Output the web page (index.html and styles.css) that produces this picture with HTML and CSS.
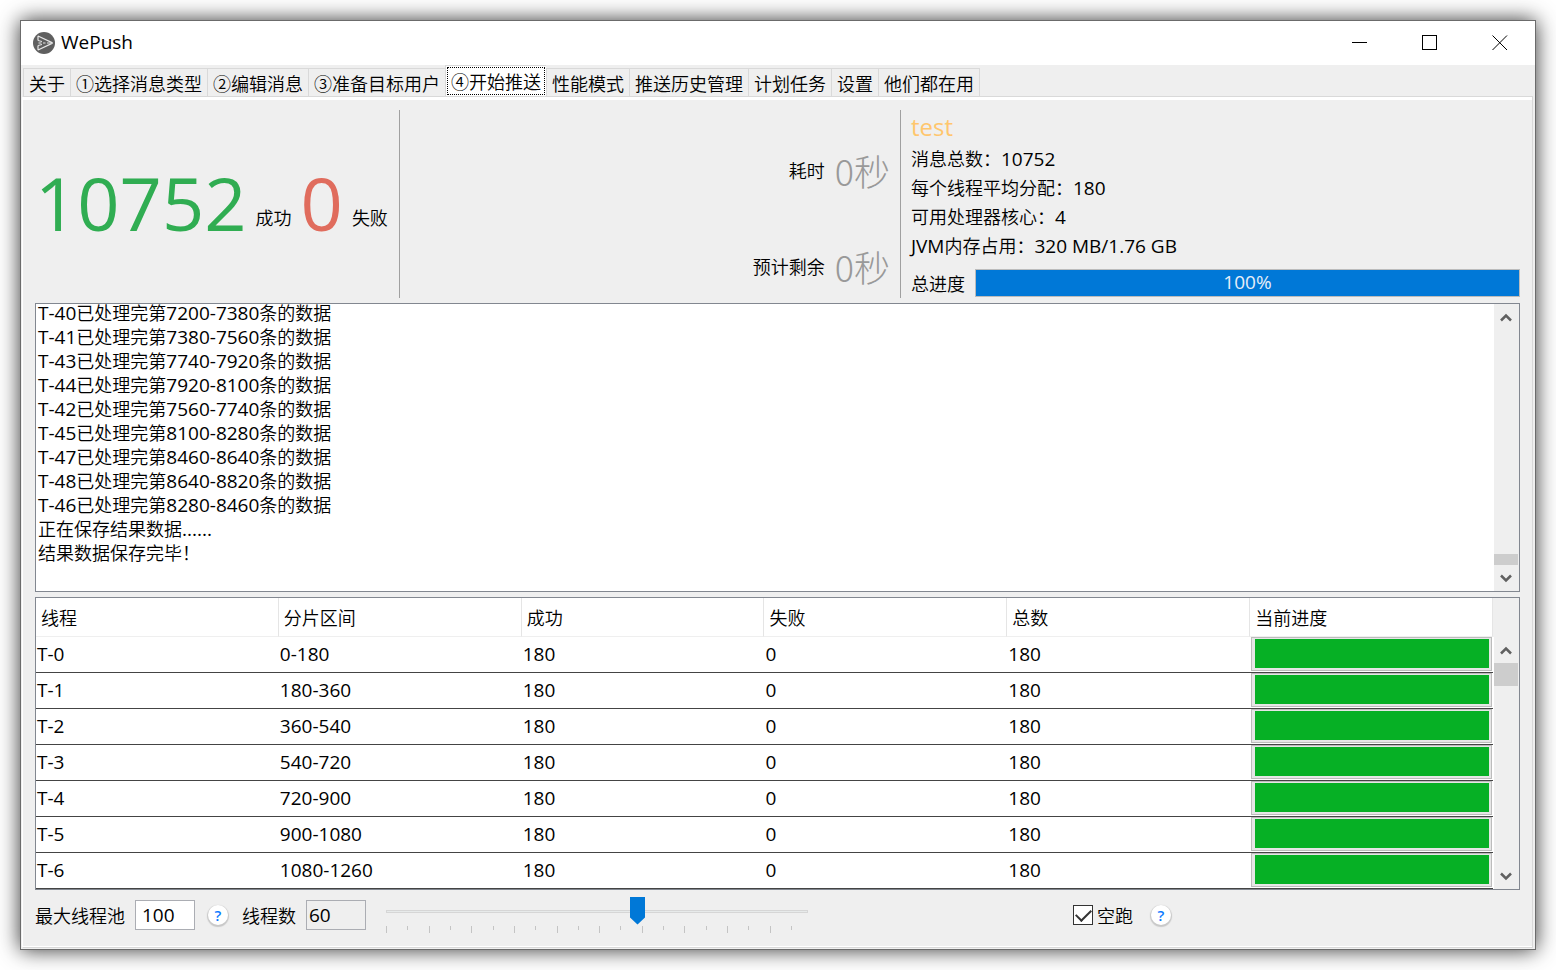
FILE: index.html
```html
<!DOCTYPE html>
<html lang="zh-CN">
<head>
<meta charset="utf-8">
<title>WePush</title>
<link rel="stylesheet" href="styles.css">
</head>
<body>
<main class="window">
  <header class="titlebar">
    <svg class="logo" viewBox="0 0 22 22" aria-hidden="true">
      <circle cx="11" cy="11" r="11" fill="#5f5f5f"/>
      <path d="M5 8.500V4.500Q5 4 5.600 4.200L19 10.600Q19.600 11 19 11.400L5.600 17.800Q5 18 5 17.500V13.500" fill="none" stroke="#e8e8e8" stroke-width="1.2" stroke-linejoin="round"/>
      <path d="M5 8.500L9 9.500M5 13.500L9 12.500M5.500 11H8.500M10 11H12.500M14 11H18" fill="none" stroke="#e8e8e8" stroke-width="1"/>
    </svg>
    <h1 class="title">WePush</h1>
    <div class="controls">
      <button class="control" type="button" aria-label="最小化"><svg viewBox="0 0 16 16" shape-rendering="crispEdges"><path d="M0 7.500H15"/></svg></button>
      <button class="control" type="button" aria-label="最大化"><svg viewBox="0 0 16 16" shape-rendering="crispEdges"><path d="M.5 .5H14.500V14.500H.5Z"/></svg></button>
      <button class="control" type="button" aria-label="关闭"><svg viewBox="0 0 16 16"><path d="M.5 .5L15 15M15 .5L.5 15"/></svg></button>
    </div>
  </header>

  <nav class="tabs" role="tablist">
    <button class="tab" role="tab" type="button">关于</button>
    <button class="tab" role="tab" type="button">①选择消息类型</button>
    <button class="tab" role="tab" type="button">②编辑消息</button>
    <button class="tab" role="tab" type="button">③准备目标用户</button>
    <button class="tab selected" role="tab" type="button" aria-selected="true"><span class="focus">④开始推送</span></button>
    <button class="tab" role="tab" type="button">性能模式</button>
    <button class="tab" role="tab" type="button">推送历史管理</button>
    <button class="tab" role="tab" type="button">计划任务</button>
    <button class="tab" role="tab" type="button">设置</button>
    <button class="tab last" role="tab" type="button">他们都在用</button>
  </nav>

  <section class="panel">
    <div class="stats">
      <div class="counts">
        <span class="big success">10752</span><span class="caption">成功</span>
        <span class="big failure">0</span><span class="caption">失败</span>
      </div>
      <div class="times">
        <div class="time"><span>耗时</span><span class="duration">0秒</span></div>
        <div class="time"><span>预计剩余</span><span class="duration">0秒</span></div>
      </div>
      <div class="info">
        <h2 class="task">test</h2>
        <p class="fact">消息总数：<span class="latin">10752</span></p>
        <p class="fact">每个线程平均分配：<span class="latin">180</span></p>
        <p class="fact">可用处理器核心：<span class="latin">4</span></p>
        <p class="fact"><span class="latin">JVM</span>内存占用：<span class="latin">320 MB/1.76 GB</span></p>
        <div class="total">
          <label for="total">总进度</label>
          <div class="total-bar"><progress id="total" class="meter blue" max="100" value="100"></progress><span class="percent">100%</span></div>
        </div>
      </div>
    </div>

    <div class="log">
      <div class="lines">
        <p><span class="latin">T-40</span>已处理完第<span class="latin">7200-7380</span>条的数据</p>
        <p><span class="latin">T-41</span>已处理完第<span class="latin">7380-7560</span>条的数据</p>
        <p><span class="latin">T-43</span>已处理完第<span class="latin">7740-7920</span>条的数据</p>
        <p><span class="latin">T-44</span>已处理完第<span class="latin">7920-8100</span>条的数据</p>
        <p><span class="latin">T-42</span>已处理完第<span class="latin">7560-7740</span>条的数据</p>
        <p><span class="latin">T-45</span>已处理完第<span class="latin">8100-8280</span>条的数据</p>
        <p><span class="latin">T-47</span>已处理完第<span class="latin">8460-8640</span>条的数据</p>
        <p><span class="latin">T-48</span>已处理完第<span class="latin">8640-8820</span>条的数据</p>
        <p><span class="latin">T-46</span>已处理完第<span class="latin">8280-8460</span>条的数据</p>
        <p>正在保存结果数据<span class="latin">......</span></p>
        <p>结果数据保存完毕！</p>
      </div>
      <div class="scrollbar">
        <button class="arrow" type="button" aria-label="向上滚动"><svg viewBox="0 0 12 9"><path d="M1 7.500L6 2.500L11 7.500"/></svg></button>
        <div class="track at-end"><div class="thumb short"></div></div>
        <button class="arrow" type="button" aria-label="向下滚动"><svg viewBox="0 0 12 9"><path d="M1 1.500L6 6.500L11 1.500"/></svg></button>
      </div>
    </div>

    <div class="threads">
      <div class="table-area">
      <table class="grid">
        <thead><tr><th>线程</th><th>分片区间</th><th>成功</th><th>失败</th><th>总数</th><th>当前进度</th></tr></thead>
        <tbody>
          <tr><td>T-0</td><td>0-180</td><td>180</td><td>0</td><td>180</td><td><progress class="meter green" aria-label="T-0" max="180" value="180"></progress></td></tr>
          <tr><td>T-1</td><td>180-360</td><td>180</td><td>0</td><td>180</td><td><progress class="meter green" aria-label="T-1" max="180" value="180"></progress></td></tr>
          <tr><td>T-2</td><td>360-540</td><td>180</td><td>0</td><td>180</td><td><progress class="meter green" aria-label="T-2" max="180" value="180"></progress></td></tr>
          <tr><td>T-3</td><td>540-720</td><td>180</td><td>0</td><td>180</td><td><progress class="meter green" aria-label="T-3" max="180" value="180"></progress></td></tr>
          <tr><td>T-4</td><td>720-900</td><td>180</td><td>0</td><td>180</td><td><progress class="meter green" aria-label="T-4" max="180" value="180"></progress></td></tr>
          <tr><td>T-5</td><td>900-1080</td><td>180</td><td>0</td><td>180</td><td><progress class="meter green" aria-label="T-5" max="180" value="180"></progress></td></tr>
          <tr><td>T-6</td><td>1080-1260</td><td>180</td><td>0</td><td>180</td><td><progress class="meter green" aria-label="T-6" max="180" value="180"></progress></td></tr>
        </tbody>
      </table>
      </div>
      <div class="side">
        <div class="corner"></div>
        <div class="scrollbar">
          <button class="arrow" type="button" aria-label="向上滚动"><svg viewBox="0 0 12 9"><path d="M1 7.500L6 2.500L11 7.500"/></svg></button>
          <div class="track"><div class="thumb"></div></div>
          <button class="arrow" type="button" aria-label="向下滚动"><svg viewBox="0 0 12 9"><path d="M1 1.500L6 6.500L11 1.500"/></svg></button>
        </div>
      </div>
    </div>

    <form class="settings">
      <div class="pool">
        <label for="max">最大线程池</label>
        <input id="max" class="field" type="text" value="100">
        <button class="help" type="button" aria-label="线程池帮助">?</button>
        <label for="count">线程数</label>
        <input id="count" class="field readonly" type="text" value="60" readonly>
        <div class="slider">
          <input class="range" type="range" aria-label="线程数" min="0" max="100" value="60">
          <div class="ticks">
            <i></i><i></i><i></i><i></i><i></i><i></i><i></i><i></i><i></i><i></i><i></i><i></i><i></i><i></i><i></i><i></i><i></i><i></i><i></i><i></i>
          </div>
        </div>
      </div>
      <div class="dry">
        <input id="dry" class="check" type="checkbox" checked>
        <label for="dry">空跑</label>
        <button class="help" type="button" aria-label="空跑帮助">?</button>
      </div>
    </form>
  </section>
</main>
</body>
</html>
```

FILE: styles.css
```css
* { box-sizing: border-box; }

body {
  margin: 0;
  padding: 20px;
  min-height: 100vh;
  display: flex;
  background: #fff;
  color: #000;
  font: 18px/24px "Noto Sans CJK SC", sans-serif;
  font-weight: 350;
}

h1, h2, p { margin: 0; font-weight: 400; }
p { font-weight: inherit; }
button, input { font: inherit; color: inherit; }
button { margin: 0; padding: 0; border: 0; background: none; }

.latin { font-family: "Open Sans", sans-serif; font-size: 19px; font-weight: 400; line-height: 18px; }

.window {
  flex: 1;
  min-width: 0;
  display: flex;
  flex-direction: column;
  border: 1px solid #6b6b6b;
  background: #efefef;
  box-shadow: 0 0 20px rgba(0, 0, 0, .8);
}

/* Title bar */
.titlebar {
  height: 44px;
  display: flex;
  align-items: center;
  gap: 6px;
  padding-left: 12px;
  background: #fff;
}
.logo { width: 22px; height: 22px; }
.title { flex: 1; padding-bottom: 2px; font: 400 19px/24px "Open Sans", sans-serif; }
.controls { display: flex; }
.control { width: 70px; height: 44px; display: grid; place-items: center; }
.control svg { width: 16px; height: 16px; fill: none; stroke: #000; }

/* Tabs */
.tabs { height: 31px; display: flex; align-items: flex-end; padding-left: 2px; }
.tab {
  height: 28px;
  padding: 0 5px;
  border-top: 1px solid #d9d9d9;
  border-left: 1px solid #d9d9d9;
  white-space: nowrap;
}
.tab.last { border-right: 1px solid #d9d9d9; }
.tab.selected { height: 31px; padding: 0 1px; background: #fff; }
.focus { display: block; padding: 0 3px; margin-bottom: 1px; border: 1px dotted #000; line-height: 26px; }

/* Panel */
.panel {
  flex: 1;
  display: flex;
  flex-direction: column;
  margin: 0 2px 1px 1px;
  padding: 13px 12px 0;
  border: 1px solid #d9d9d9;
  border-left-color: #fff;
  box-shadow: inset 0 -1px #fff, inset 0 3px #fff;
}

.stats { display: grid; grid-template-columns: auto 501fr 619fr; min-height: 188px; }
.counts { display: flex; align-items: center; gap: 9px; padding: 0 11px 2px 0; border-right: 1px solid #a0a0a0; }
.big { font: 400 74px/100px "Open Sans", sans-serif; }
.success { color: #30ad52; }
.failure { color: #e06c5d; }
.caption { padding-top: 28px; }
.times {
  display: flex;
  flex-direction: column;
  justify-content: center;
  gap: 44px;
  padding: 28px 10px 0 0;
  border-right: 1px solid #a0a0a0;
}
.time { display: flex; justify-content: flex-end; align-items: center; gap: 10px; }
.duration { color: #999; font-size: 36px; line-height: 52px; font-weight: 300; }
.info { padding-left: 10px; }
.task { color: #ffc66d; font: 400 24px/34px "Open Sans", sans-serif; }
.fact { line-height: 29px; white-space: nowrap; }
.total { display: flex; align-items: center; gap: 10px; margin-top: 9px; }
.total-bar { position: relative; flex: 1; height: 28px; }
.percent {
  position: absolute;
  inset: 0;
  color: #e6eef8;
  font: 400 19px/26px "Open Sans", sans-serif;
  text-align: center;
}

.meter {
  appearance: none;
  display: block;
  width: 100%;
  height: 28px;
  border: 1px solid #bcbcbc;
  background: #e6e6e6;
}
.meter::-webkit-progress-bar { background: #e6e6e6; }
.blue::-webkit-progress-value { background: #0078d7; }
.green { height: 34px; padding: 1px 2px 2px 3px; }
.green::-webkit-progress-value { background: #06b025; }

/* Log */
.log {
  flex: 1;
  min-height: 289px;
  display: flex;
  margin: 5px 0;
  border: 1px solid #828790;
  background: #fff;
}
.lines {
  flex: 1;
  display: flex;
  flex-direction: column;
  gap: 6px;
  padding: 0 2px;
  line-height: 16px;
}
.lines p { height: 18px; white-space: nowrap; }
.lines .latin { line-height: 16px; }

.scrollbar { width: 25px; display: flex; flex-direction: column; padding-right: 1px; background: #efefef; }
.arrow { height: 26px; display: grid; place-items: center; }
.arrow svg { width: 12px; height: 9px; fill: none; stroke: #606060; stroke-width: 2.5; }
.track { flex: 1; display: flex; flex-direction: column; }
.track.at-end { justify-content: flex-end; }
.thumb { height: 23px; background: #cdcdcd; }
.thumb.short { height: 11px; }

/* Thread table */
.threads { display: flex; border: 1px solid #828790; background: #fff; }
.table-area { flex: 1; min-width: 0; }
.grid { width: 100%; table-layout: fixed; border-collapse: separate; border-spacing: 0; }
.grid th {
  height: 39px;
  padding: 0 5px;
  border-right: 1px solid #e5e5e5;
  border-bottom: 1px solid #efefef;
  font-weight: inherit;
  text-align: left;
}
.grid td {
  height: 36px;
  padding: 0 1px 2px;
  border-bottom: 1px solid #444;
  font: 400 19px/24px "Open Sans", sans-serif;
}
.grid td:last-child { padding: 0 1px 1px; }
.side { width: 26px; display: flex; flex-direction: column; align-items: flex-end; }
.corner { width: 100%; height: 39px; background: #efefef; }
.side .scrollbar { flex: 1; }

/* Bottom controls */
.settings { display: grid; grid-template-columns: 1038fr 447fr; padding: 5px 0 6px; }
.pool, .dry { display: flex; align-items: center; white-space: nowrap; height: 46px; padding-bottom: 6px; }
.field {
  width: 60px;
  height: 30px;
  margin: 0 13px 0 10px;
  padding: 0 6px;
  border: 1px solid #abadb3;
  background: #fff;
  font: 400 19px/24px "Open Sans", sans-serif;
}
.field.readonly { margin-right: 20px; padding: 0 2px; background: #efefef; }
.help {
  width: 20px;
  height: 20px;
  margin-right: 14px;
  border-radius: 50%;
  background: #fff;
  box-shadow: 0 1px 1px 1px #c8c8c8;
  color: #0a7aff;
  font: 600 15px/20px "Open Sans", sans-serif;
}
.slider { flex: none; width: 422px; height: 36px; }
.range { appearance: none; display: block; width: 100%; height: 28px; margin: 0; background: none; }
.range::-webkit-slider-runnable-track { height: 3px; border: 1px solid #d6d6d6; background: #e7eaea; }
.range::-webkit-slider-thumb {
  appearance: none;
  width: 15px;
  height: 28px;
  margin-top: -14px;
  background: #0078d7;
  clip-path: polygon(0 0, 100% 0, 100% 75%, 50% 100%, 0 75%);
}
.ticks { display: flex; justify-content: space-between; margin-right: 16px; padding-top: 1px; }
.ticks i { width: 1px; height: 7px; background: #c4c4c4; }
.ticks i:nth-child(even) { height: 4px; }
.check {
  appearance: none;
  width: 20px;
  height: 20px;
  margin: 0 4px 0 0;
  border: 1px solid #333;
  background: #fff;
  display: grid;
  place-items: center;
}
.check:checked::before {
  content: "";
  width: 13px;
  height: 7px;
  margin-bottom: 4px;
  border-left: 2px solid #333;
  border-bottom: 2px solid #333;
  transform: rotate(-45deg);
}
.dry .help { margin-left: 18px; }
```
